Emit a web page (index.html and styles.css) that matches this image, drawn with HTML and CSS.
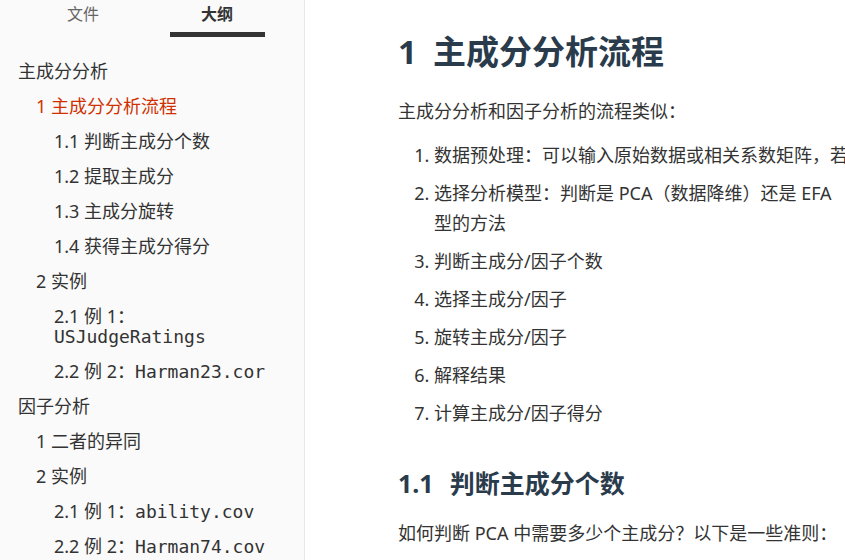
FILE: index.html
```html
<!DOCTYPE html>
<html lang="zh-CN">
<head>
<meta charset="utf-8">
<meta name="viewport" content="width=device-width, initial-scale=1">
<title>主成分分析</title>
<link rel="stylesheet" href="styles.css">
</head>
<body>
<div class="app">
  <aside class="sidebar">
    <div class="tabs">
      <button class="tab" type="button">文件</button>
      <button class="tab tab-active" type="button">大纲</button>
    </div>
    <nav class="outline">
      <a class="item" href="#">主成分分析</a>
      <a class="item level-2 current" href="#flow">1 主成分分析流程</a>
      <a class="item level-3" href="#count">1.1 判断主成分个数</a>
      <a class="item level-3" href="#">1.2 提取主成分</a>
      <a class="item level-3" href="#">1.3 主成分旋转</a>
      <a class="item level-3" href="#">1.4 获得主成分得分</a>
      <a class="item level-2" href="#">2 实例</a>
      <a class="item level-3" href="#">2.1 例 1：<br><code>USJudgeRatings</code></a>
      <a class="item level-3" href="#">2.2 例 2：<code>Harman23.cor</code></a>
      <a class="item" href="#">因子分析</a>
      <a class="item level-2" href="#">1 二者的异同</a>
      <a class="item level-2" href="#">2 实例</a>
      <a class="item level-3" href="#">2.1 例 1：<code>ability.cov</code></a>
      <a class="item level-3" href="#">2.2 例 2：<code>Harman74.cov</code></a>
    </nav>
  </aside>
  <main class="content">
    <h1 id="flow"><span class="number">1</span>主成分分析流程</h1>
    <p>主成分分析和因子分析的流程类似：</p>
    <ol>
      <li>数据预处理：可以输入原始数据或相关系数矩阵，若</li>
      <li>选择分析模型：判断是 PCA（数据降维）还是 EFA<br>型的方法</li>
      <li>判断主成分/因子个数</li>
      <li>选择主成分/因子</li>
      <li>旋转主成分/因子</li>
      <li>解释结果</li>
      <li>计算主成分/因子得分</li>
    </ol>
    <h2 id="count"><span class="number">1.1</span>判断主成分个数</h2>
    <p>如何判断 PCA 中需要多少个主成分？以下是一些准则：</p>
  </main>
</div>
</body>
</html>
```

FILE: styles.css
```css
* {
  box-sizing: border-box;
}

body {
  margin: 0;
  background: #fff;
  color: #333;
  font-family: "Noto Sans", "Noto Sans CJK SC", sans-serif;
  font-size: 18px;
}

.app {
  display: grid;
  grid-template-columns: 305px minmax(0, 1fr);
  height: 100vh;
  overflow: hidden;
}

.sidebar {
  overflow: hidden;
  background: #fafafa;
  border-right: 1px solid #e7e7e7;
}

.tabs {
  display: grid;
  grid-template-columns: 1fr 1fr;
  padding: 0 20px 0 16px;
}

.tab {
  display: flex;
  flex-direction: column;
  align-items: center;
  gap: 4px;
  height: 37px;
  padding: 0;
  border: 0;
  background: none;
  color: #666;
  font: 16px/28px "Noto Sans", "Noto Sans CJK SC", sans-serif;
}

.tab::after {
  content: "";
  width: 95px;
  height: 5px;
}

.tab-active {
  color: #333;
  font-weight: 700;
}

.tab-active::after {
  background: #333;
}

.outline {
  display: flex;
  flex-direction: column;
  gap: 15px;
  padding: 24px 18px 0;
}

.item {
  color: #333;
  line-height: 20px;
  text-decoration: none;
  white-space: nowrap;
}

.level-2 {
  padding-left: 18px;
}

.level-3 {
  padding-left: 36px;
}

.current {
  color: #d03000;
}

code {
  font-family: "DejaVu Sans Mono", monospace;
  font-size: 18px;
  line-height: 16px;
}

.content {
  overflow: hidden;
  padding: 29px 0 0 93px;
  line-height: 30px;
  white-space: nowrap;
}

h1,
h2 {
  margin: 0;
  color: #2a3b4c;
  font-weight: 700;
}

h1 {
  margin-bottom: 21px;
  font-size: 33px;
  line-height: 46px;
}

h2 {
  margin: 35px 0 15px;
  font-size: 25px;
  line-height: 40px;
}

.number {
  margin-right: 16px;
}

p {
  margin: 0 0 14px;
}

ol {
  display: flex;
  flex-direction: column;
  gap: 8px;
  margin: 0;
  padding-left: 36px;
}
```
